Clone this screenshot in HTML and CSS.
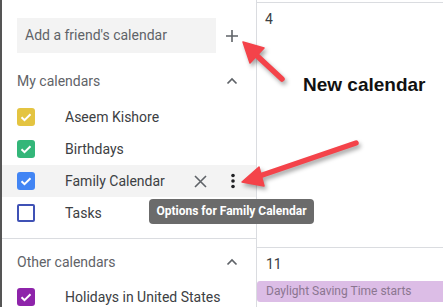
FILE: index.html
```html
<!DOCTYPE html>
<html>
<head>
<meta charset="utf-8">
<link rel="stylesheet" href="styles.css">
</head>
<body>
<div class="page">
  <aside class="sidebar">
    <div class="search-row">
      <div class="search">Add a friend's calendar</div>
      <svg class="plus" width="14" height="14" viewBox="0 0 14 14"><path d="M7 1v12M1 7h12" stroke="#5f6368" stroke-width="1.6" fill="none"/></svg>
    </div>
    <div class="section-head">
      <span>My calendars</span>
      <svg class="chev" width="12" height="8" viewBox="0 0 12 8"><path d="M1.5 6.5L6 2l4.5 4.5" stroke="#5f6368" stroke-width="1.7" fill="none"/></svg>
    </div>
    <div class="cal-row">
      <span class="cb yellow"><svg viewBox="0 0 18 18"><path d="M4.5 9.2l3 3 6-6" stroke="#fff" stroke-width="2" fill="none"/></svg></span>
      <span class="label">Aseem Kishore</span>
    </div>
    <div class="cal-row">
      <span class="cb green"><svg viewBox="0 0 18 18"><path d="M4.5 9.2l3 3 6-6" stroke="#fff" stroke-width="2" fill="none"/></svg></span>
      <span class="label">Birthdays</span>
    </div>
    <div class="cal-row active">
      <span class="cb blue"><svg viewBox="0 0 18 18"><path d="M4.5 9.2l3 3 6-6" stroke="#fff" stroke-width="2" fill="none"/></svg></span>
      <span class="label">Family Calendar</span>
      <svg class="xicon" width="13" height="13" viewBox="0 0 13 13"><path d="M1 1l11 11M12 1L1 12" stroke="#5f6368" stroke-width="1.6" fill="none"/></svg>
      <svg class="kebab" width="6" height="16" viewBox="0 0 6 16"><circle cx="3" cy="2.5" r="1.8" fill="#202124"/><circle cx="3" cy="8" r="1.8" fill="#202124"/><circle cx="3" cy="13.5" r="1.8" fill="#202124"/></svg>
    </div>
    <div class="cal-row">
      <span class="cb outline"></span>
      <span class="label">Tasks</span>
    </div>
    <div class="divider"></div>
    <div class="section-head other">
      <span>Other calendars</span>
      <svg class="chev" width="12" height="8" viewBox="0 0 12 8"><path d="M1.5 6.5L6 2l4.5 4.5" stroke="#5f6368" stroke-width="1.7" fill="none"/></svg>
    </div>
    <div class="cal-row">
      <span class="cb purple"><svg viewBox="0 0 18 18"><path d="M4.5 9.2l3 3 6-6" stroke="#fff" stroke-width="2" fill="none"/></svg></span>
      <span class="label">Holidays in United States</span>
    </div>
  </aside>
  <main class="grid">
    <div class="week first">
      <div class="day-num">4</div>
      <div class="callout">New calendar</div>
    </div>
    <div class="week">
      <div class="day-num">11</div>
      <div class="event">Daylight Saving Time starts</div>
    </div>
  </main>
  <div class="tooltip">Options for Family Calendar</div>
  <svg class="arrows" width="443" height="307" viewBox="0 0 443 307">
    <g fill="#f4434a" stroke="#f4434a">
      <line x1="282" y1="79" x2="254" y2="53" stroke-width="5.5" stroke-linecap="round"/>
      <polygon points="243,42 264,48 250,63" stroke-width="1.5" stroke-linejoin="round"/>
      <line x1="356" y1="143" x2="258" y2="176.5" stroke-width="5.5" stroke-linecap="round"/>
      <polygon points="242,182 259,167 264,186" stroke-width="1.5" stroke-linejoin="round"/>
    </g>
  </svg>
</div>
</body>
</html>
```
FILE: styles.css
```css
* { box-sizing: border-box; }
html, body { margin: 0; padding: 0; background: #fff; }
body { font-family: Roboto, "Liberation Sans", Arial, sans-serif; }
.page {
  position: relative;
  width: 443px;
  height: 307px;
  overflow: hidden;
  display: flex;
  border-left: 2px solid #555;
}
.sidebar {
  width: 255px;
  flex: none;
  border-right: 1px solid #dadce0;
  padding-top: 18px;
}
.search-row {
  display: flex;
  align-items: center;
  height: 35px;
  padding-left: 15px;
}
.search {
  width: 199px;
  height: 35px;
  background: #f3f3f3;
  color: #5f6368;
  font-size: 14px;
  line-height: 35px;
  padding-left: 8px;
}
.plus { margin-left: 9px; }
.section-head {
  display: flex;
  align-items: center;
  justify-content: space-between;
  height: 48px;
  padding: 7px 18px 0 15px;
  color: #5f6368;
  font-size: 14px;
}
.section-head.other { height: 42px; padding-top: 4px; }
.cal-row {
  display: flex;
  align-items: center;
  height: 32px;
  padding-left: 15px;
  position: relative;
}
.cal-row.active { background: #f3f3f3; }
.cb {
  width: 18px;
  height: 18px;
  border-radius: 3px;
  flex: none;
  display: flex;
}
.cb svg { width: 18px; height: 18px; }
.yellow { background: #e4c441; }
.green { background: #33b679; }
.blue { background: #4285f4; }
.purple { background: #8e24aa; }
.outline { border: 2px solid #3f51b5; border-radius: 2px; }
.label {
  margin-left: 30px;
  font-size: 14px;
  color: #3c4043;
}
.xicon { margin-left: 29px; }
.kebab { margin-left: 23px; }
.divider {
  height: 1px;
  background: #dadce0;
  margin-top: 9px;
}
.grid {
  flex: 1;
  padding-top: 2px;
}
.week {
  position: relative;
  border-top: 1px solid #dadce0;
}
.week.first { height: 245px; }
.day-num {
  font-size: 14px;
  color: #3c4043;
  padding-left: 8px;
  line-height: 16px;
  padding-top: 8px;
}
.week:not(.first) .day-num { padding-top: 8px; padding-left: 9px; }
.callout {
  font-family: "Liberation Sans", Arial, sans-serif;
  font-weight: bold;
  font-size: 19px;
  color: #111;
  margin: 47px 0 0 46px;
}
.event {
  margin-top: 9px;
  height: 21px;
  background: #dcbde6;
  color: #8b7690;
  font-size: 12px;
  line-height: 21px;
  padding-left: 9px;
  border-radius: 3px 0 0 3px;
  white-space: nowrap;
}
.tooltip {
  position: absolute;
  left: 147px;
  top: 199px;
  width: 165px;
  height: 25px;
  background: #6b6b6b;
  color: #fff;
  font-size: 12px;
  font-weight: bold;
  line-height: 25px;
  text-align: center;
  border-radius: 4px;
  white-space: nowrap;
}
.arrows {
  position: absolute;
  left: -2px;
  top: 0;
  filter: drop-shadow(2px 3px 2px rgba(0,0,0,0.35));
  pointer-events: none;
}
```
